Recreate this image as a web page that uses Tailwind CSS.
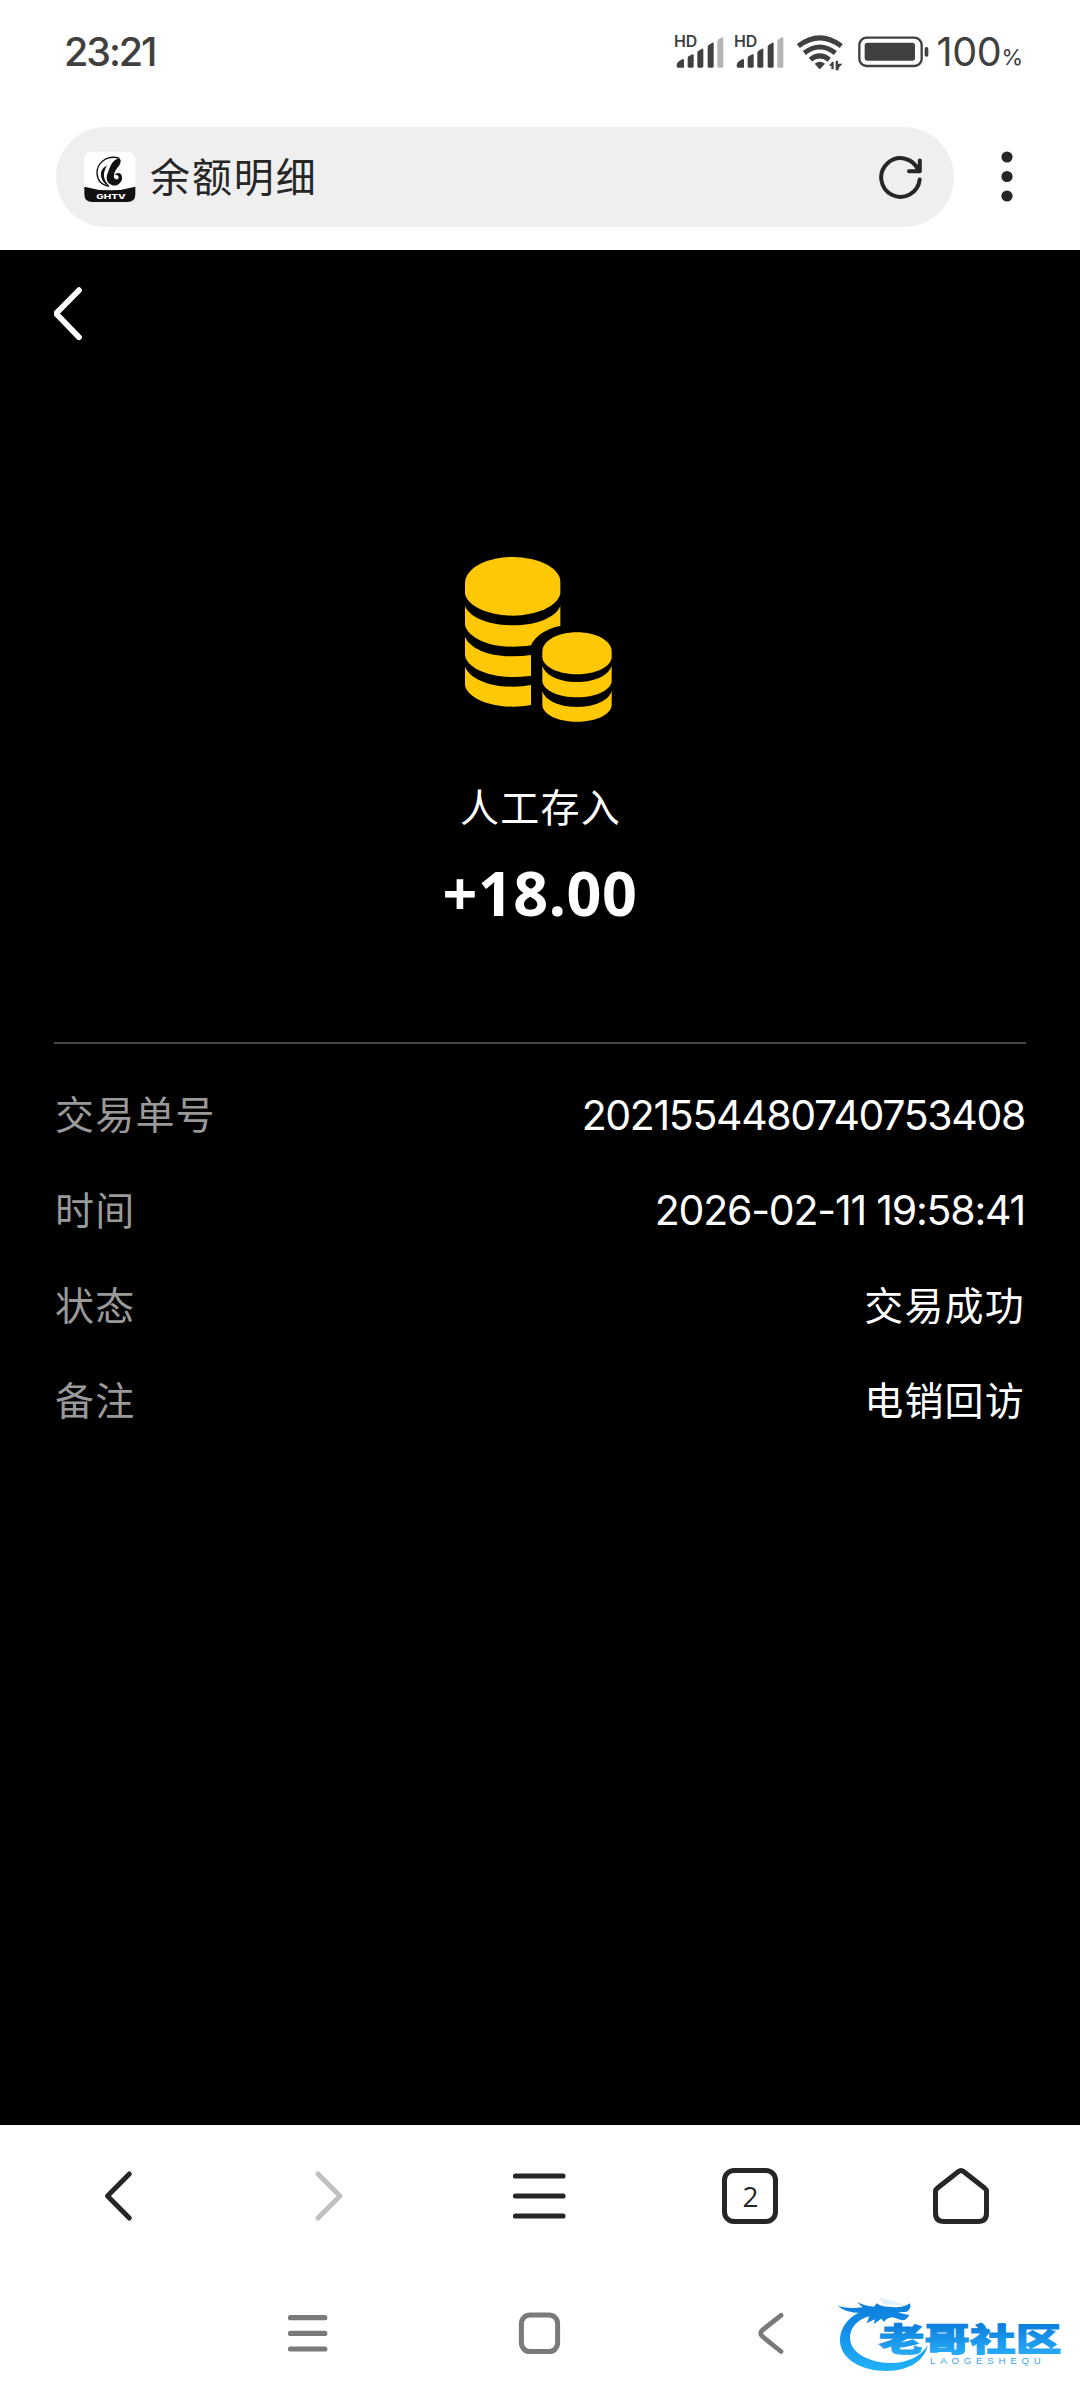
<!DOCTYPE html>
<html lang="zh-CN">
<head>
    <meta charset="UTF-8">
    <meta name="viewport" content="width=device-width, initial-scale=1.0">
    <title>余额明细</title>
    <script src="https://cdn.jsdelivr.net/npm/@tailwindcss/browser@4"></script>
</head>
<body class="bg-white font-['Inter','Noto_Sans_CJK_SC',sans-serif]">
<div class="relative w-[1080px] h-[2400px] flex flex-col overflow-hidden">

    <!-- status bar -->
    <div class="h-[103px] pl-[64px] pr-[58px] flex items-center justify-between text-[#404040]">
        <span class="pt-[2px] text-[39.5px] font-medium leading-none tracking-[-2.1px]">23:21</span>
        <div class="flex items-center">
            <svg class="w-[60px] h-[40px]" viewBox="45 65 180 120">
                <text x="45" y="111" font-size="46" font-weight="600" fill="#404040" textLength="70" lengthAdjust="spacingAndGlyphs">HD</text>
                <g fill="#404040">
                    <path d="M53 166Q53 156 62 151L71 146Q75 146 75 150V172H57Q53 172 53 166Z"/>
                    <path d="M86 143Q86 139 90 137L100 132Q104 131 104 135V168Q104 172 100 172H90Q86 172 86 168Z"/>
                    <path d="M115 127Q115 123 119 121L129 115Q133 114 133 118V168Q133 172 129 172H119Q115 172 115 168Z"/>
                    <path d="M146 110Q146 106 150 103L160 97Q164 96 164 100V168Q164 172 160 172H150Q146 172 146 168Z"/>
                </g>
                <path fill="#b5b5b5" d="M175 94Q175 90 179 87L189 81Q193 80 193 84V168Q193 172 189 172H179Q175 172 175 168Z"/>
            </svg>
            <svg class="w-[60px] h-[40px]" viewBox="45 65 180 120">
                <text x="45" y="111" font-size="46" font-weight="600" fill="#404040" textLength="70" lengthAdjust="spacingAndGlyphs">HD</text>
                <g fill="#404040">
                    <path d="M53 166Q53 156 62 151L71 146Q75 146 75 150V172H57Q53 172 53 166Z"/>
                    <path d="M86 143Q86 139 90 137L100 132Q104 131 104 135V168Q104 172 100 172H90Q86 172 86 168Z"/>
                    <path d="M115 127Q115 123 119 121L129 115Q133 114 133 118V168Q133 172 129 172H119Q115 172 115 168Z"/>
                    <path d="M146 110Q146 106 150 103L160 97Q164 96 164 100V168Q164 172 160 172H150Q146 172 146 168Z"/>
                </g>
                <path fill="#b5b5b5" d="M175 94Q175 90 179 87L189 81Q193 80 193 84V168Q193 172 189 172H179Q175 172 175 168Z"/>
            </svg>
            <svg class="w-[60px] h-[40px]" viewBox="405 65 180 120">
                <g fill="none" stroke="#404040" stroke-width="15">
                    <path d="M418 107Q482 58 547 107"/>
                    <path d="M436 128Q482 92 529 128"/>
                    <path d="M454 148Q482 125 511 148"/>
                </g>
                <path fill="#404040" d="M467 160Q482 149 498 160L484 175Q482 177 480 175Z"/>
                <path fill="#404040" d="M509 166L520 154H524V177H517V166ZM530 151H537V160H550L539 173V180H530Z"/>
            </svg>
            <svg class="w-[76px] h-[40px]" viewBox="585 65 228 120">
                <rect x="601" y="82" width="187" height="85" rx="22" fill="none" stroke="#404040" stroke-width="7"/>
                <rect x="617" y="97" width="151" height="54" rx="8" fill="#404040"/>
                <rect x="797" y="110" width="11" height="29" rx="5" fill="#404040"/>
            </svg>
            <span class="ml-[6px] pt-[2px] text-[39.5px] leading-none tracking-[-0.3px]">100</span>
            <span class="text-[22px] leading-none pt-[11px] tracking-[-1px]">%</span>
        </div>
    </div>

    <!-- address bar -->
    <div class="h-[147px] pt-6 pl-14 flex items-start">
        <div class="w-[898px] h-[100px] rounded-full bg-[#efefef] flex items-center pl-7 pr-[30px]">
            <svg class="w-[52px] h-[52px] shrink-0" viewBox="41 31 156 156">
                <rect x="42" y="33" width="153" height="151" rx="24" fill="#fff"/>
                <path fill="#111" d="M42 138Q118 160 195 138V160Q195 184 171 184H66Q42 184 42 160Z"/>
                <text x="78" y="175" font-size="20" font-weight="800" fill="#fff" textLength="88" lengthAdjust="spacingAndGlyphs">GHTV</text>
                <path fill="none" stroke="#111" stroke-width="4" d="M146 52C108 42 79 68 80 98C81 118 94 133 116 137"/>
                <path fill="#111" d="M112 74C92 82 87 100 96 118C102 129 110 134 118 137C103 122 97 106 103 90C105 83 108 78 112 74Z"/>
                <path fill="#111" d="M147 52C157 63 146 76 139 84C133 92 130 102 131 110C134 118 143 118 145 111C145 104 140 101 133 104C139 93 154 95 155 109C157 125 141 138 126 134C108 128 106 111 112 98C118 84 121 60 147 52Z"/>
            </svg>
            <span class="ml-[14px] pt-[2px] grow text-[40px] leading-none tracking-[1.9px] text-[#262626]">余额明细</span>
            <svg class="w-[48px] h-[48px] shrink-0" viewBox="876 152 48 48" fill="none" stroke="#262626" stroke-width="4" stroke-linecap="round" stroke-linejoin="round">
                <path d="M919.7 178.5A19.3 19.3 0 1 1 918.5 169.5"/>
                <path d="M919.8 159.5V170.2H909"/>
            </svg>
        </div>
        <svg class="w-[24px] h-[60px] ml-[41px] mt-5" viewBox="0 0 24 60" fill="#262626">
            <circle cx="12" cy="10" r="5.6"/>
            <circle cx="12" cy="29.5" r="5.6"/>
            <circle cx="12" cy="49" r="5.6"/>
        </svg>
    </div>

    <!-- page -->
    <main class="h-[1875px] bg-black text-white px-[54px] flex flex-col">
        <svg class="w-[30px] h-[54px] mt-[37px] shrink-0" viewBox="54 287 30 54" fill="none" stroke="#fff" stroke-width="5.8" stroke-linecap="round" stroke-linejoin="round">
            <path d="M79 290.2L56 313.5L79 337.2"/>
        </svg>
        <div class="h-[701px] pt-[209px] flex flex-col items-center shrink-0">
            <svg class="w-[160px] h-[180px]" viewBox="60 60 480 540" fill="#ffc804">
                <path d="M75 160C75 115 140 81 218 81S361 115 361 155V190C355 228 290 257 218 257S80 228 75 190Z"/>
                <path d="M75 228C88 262 146 286 218 286S348 262 361 228V288C320 295 285 318 273 346C255 349 237 350 218 350C140 350 82 320 75 284Z"/>
                <path d="M75 320C90 356 146 379 218 379Q247 379 273 375V437Q247 441 218 441C140 441 80 412 75 376Z"/>
                <path d="M75 410C90 446 146 470 218 470Q247 470 273 465V525Q247 530 218 530C140 530 80 500 75 465Z"/>
                <path d="M307 365C307 332 353 307 411 307S515 332 515 365V384C510 412 465 433 411 433S312 412 307 384Z"/>
                <path d="M307 408C318 438 360 456 411 456S504 438 515 408V455C510 482 465 502 411 502S312 482 307 455Z"/>
                <path d="M307 484C318 514 360 531 411 531S504 514 515 484V527C510 556 465 575 411 575S312 556 307 527Z"/>
            </svg>
            <p class="mt-[48px] h-[60px] leading-[60px] text-[39px] tracking-[1.2px] pl-px">人工存入</p>
            <p class="mt-[15px] h-[80px] leading-[80px] font-['Noto_Sans',sans-serif] text-[61px] font-bold tracking-[0.6px]">+18.00</p>
        </div>
        <div class="border-t-2 border-[#484848] pt-[24px] px-px text-[39px] tracking-[1.2px] shrink-0">
            <div class="h-[95.3px] flex items-center justify-between">
                <span class="text-[#999]">交易单号</span>
                <span class="text-[41px] tracking-[-1.35px]">2021554480740753408</span>
            </div>
            <div class="h-[95.3px] flex items-center justify-between">
                <span class="text-[#999]">时间</span>
                <span class="text-[41px] tracking-[-1.2px]">2026-02-11 19:58:41</span>
            </div>
            <div class="h-[95.3px] flex items-center justify-between">
                <span class="text-[#999]">状态</span>
                <span>交易成功</span>
            </div>
            <div class="h-[95.3px] flex items-center justify-between">
                <span class="text-[#999]">备注</span>
                <span>电销回访</span>
            </div>
        </div>
    </main>

    <!-- browser toolbar -->
    <nav class="h-[142px] px-[14px] grid grid-cols-5 items-center justify-items-center text-[#262626]">
        <svg class="w-[60px] h-[60px]" viewBox="90 2166 60 60" fill="none" stroke="currentColor" stroke-width="5" stroke-linecap="round" stroke-linejoin="round">
            <path d="M130.3 2174L108.5 2196L130.3 2218"/>
        </svg>
        <svg class="w-[60px] h-[60px]" viewBox="300 2166 60 60" fill="none" stroke="#c0c0c0" stroke-width="5" stroke-linecap="round" stroke-linejoin="round">
            <path d="M318 2174L340 2196L318 2218"/>
        </svg>
        <svg class="w-[60px] h-[60px]" viewBox="510 2166 60 60" stroke="currentColor" stroke-width="5.2" stroke-linecap="round">
            <path d="M515.5 2176H563M515.5 2196H563M515.5 2216H563"/>
        </svg>
        <div class="w-[56px] h-[56px] border-[5px] border-[#262626] rounded-[12px] flex items-center justify-center font-['Open_Sans',sans-serif] text-[28px] leading-none">2</div>
        <svg class="w-[60px] h-[60px]" viewBox="931 2166 60 60" fill="none" stroke="currentColor" stroke-width="5" stroke-linejoin="round">
            <path d="M935.5 2191.5Q935.5 2189.5 937.5 2188L958.5 2171.5Q961 2169.5 963.5 2171.5L984.5 2188Q986.5 2189.5 986.5 2191.5V2213Q986.5 2221.5 978 2221.5H944Q935.5 2221.5 935.5 2213Z"/>
        </svg>
    </nav>

    <!-- system navigation -->
    <div class="h-[133px] pt-[36px] pl-[278px] flex gap-[172px]">
        <svg class="w-[60px] h-[60px]" viewBox="278 2303 60 60" stroke="#7a7a7a" stroke-width="5.2" stroke-linecap="round">
            <path d="M290.5 2317.7H324.8M290.5 2333.4H324.8M290.5 2349H324.8"/>
        </svg>
        <svg class="w-[60px] h-[60px]" viewBox="510 2303 60 60" fill="none" stroke="#7a7a7a" stroke-width="5">
            <rect x="521.4" y="2315" width="36.2" height="36.6" rx="8.5"/>
        </svg>
        <svg class="w-[60px] h-[60px]" viewBox="742 2303 60 60" fill="none" stroke="#7a7a7a" stroke-width="4.8" stroke-linecap="round">
            <path d="M781 2315.3L762.5 2330Q759 2333.3 762.5 2336.5L781 2351.5"/>
        </svg>
    </div>

    <!-- community logo, lies over the navigation -->
    <svg class="absolute left-[835px] top-[2295px] w-[240px] h-[90px]" viewBox="345 45 720 270">
        <defs>
            <linearGradient id="blue" gradientUnits="userSpaceOnUse" x1="0" y1="70" x2="0" y2="270">
                <stop offset="0" stop-color="#0c7fdc"/>
                <stop offset="0.45" stop-color="#1490e8"/>
                <stop offset="1" stop-color="#22b2f8"/>
            </linearGradient>
            <linearGradient id="word" gradientUnits="userSpaceOnUse" x1="0" y1="132" x2="0" y2="220">
                <stop offset="0" stop-color="#0b7edb"/>
                <stop offset="1" stop-color="#27a9f6"/>
            </linearGradient>
        </defs>
        <g fill="url(#blue)">
            <path d="M452 86C392 98 360 138 360 183C362 235 420 273 500 273C570 272 615 240 623 195C606 227 563 250 510 249C443 247 392 216 390 176C389 145 409 120 448 108Z"/>
            <path d="M353 78Q385 88 428 82L411 66Q440 80 462 80L470 70Q486 82 510 80Q545 86 570 70Q576 88 558 96L534 97Q560 106 568 104Q562 120 546 121L518 112Q500 113 492 126L484 116L462 132L464 118L440 130L448 108L420 112L440 98Q385 104 353 78Z"/>
            <path d="M478 53Q530 62 562 82Q530 72 490 72Z" opacity="0.12"/>
        </g>
        <text x="476" y="212" font-size="96" font-weight="900" fill="url(#word)" stroke="url(#word)" stroke-width="3" textLength="548" lengthAdjust="spacingAndGlyphs" font-family="Noto Sans CJK SC, sans-serif">老哥社区</text>
        <text x="630" y="252" font-size="29" fill="#3aa4ee" textLength="332" font-family="Liberation Sans, sans-serif">LAOGESHEQU</text>
    </svg>
</div>
</body>
</html>
